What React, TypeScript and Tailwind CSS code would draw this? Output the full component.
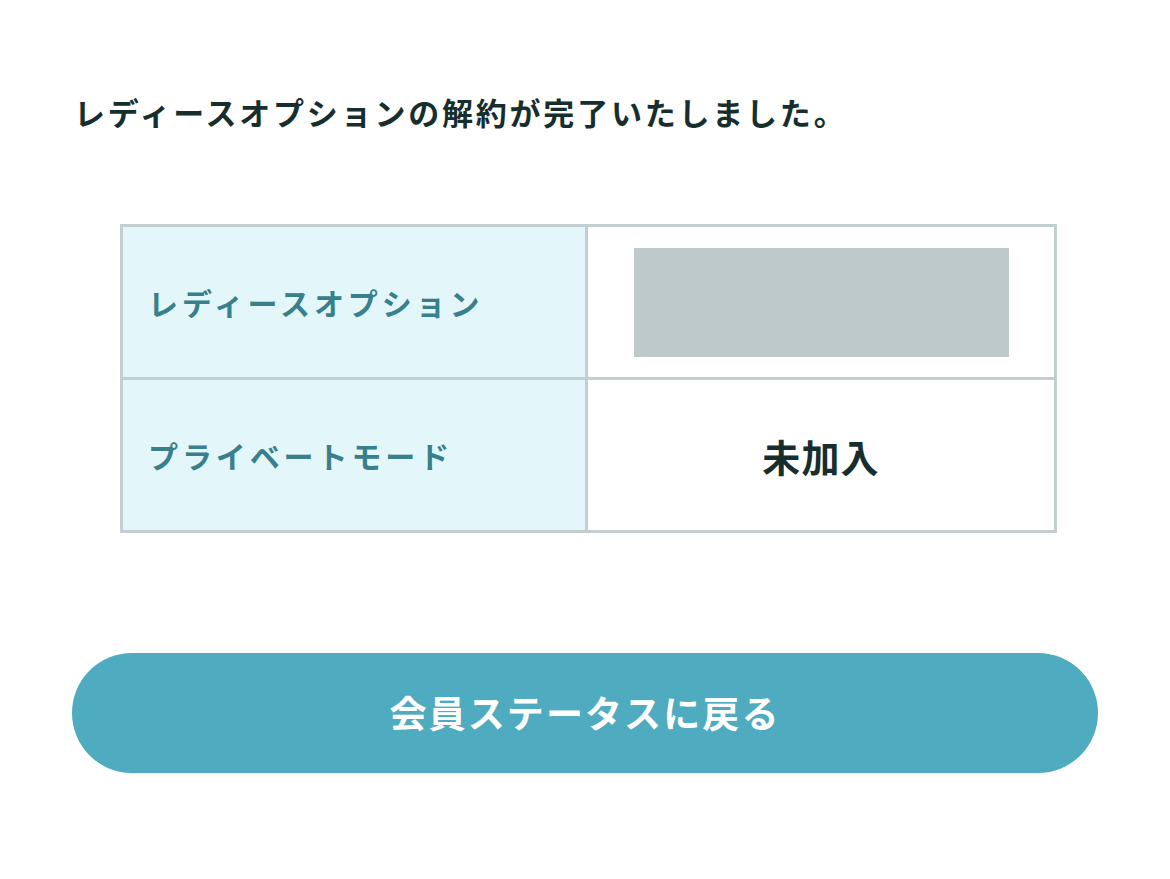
export default function App() {
  return (
    <div
      className="min-h-[879px] bg-white px-[72px] pt-[92px]"
      style={{ fontFamily: '"Noto Sans CJK JP", "Noto Sans", sans-serif' }}
    >
      <h1 className="pl-[2px] text-[31px] font-bold leading-[40px] tracking-[0.09em] text-[#172e2e]">
        レディースオプションの解約が完了いたしました。
      </h1>

      <table className="ml-[48px] mt-[92px] w-[937px] border-collapse border-[3px] border-[#c2cecf]">
        <tbody>
          <tr className="h-[153px]">
            <th className="w-[465px] border-[3px] border-[#c2cecf] bg-[#e3f6f9] pl-[25px] text-left text-[30px] font-bold tracking-[0.13em] text-[#38808c]">
              レディースオプション
            </th>
            <td className="border-[3px] border-[#c2cecf]">
              <div className="mx-auto h-[109px] w-[375px] bg-[#bdc9ca]" />
            </td>
          </tr>
          <tr className="h-[153px]">
            <th className="border-[3px] border-[#c2cecf] bg-[#e3f6f9] pl-[25px] text-left text-[30px] font-bold tracking-[0.13em] text-[#38808c]">
              プライベートモード
            </th>
            <td className="border-[3px] border-[#c2cecf] text-center text-[38px] font-bold tracking-[0.03em] text-[#172e2e]">
              未加入
            </td>
          </tr>
        </tbody>
      </table>

      <button className="mt-[120px] flex h-[120px] w-[1026px] items-center justify-center rounded-full bg-[#4eabc0] text-[37px] font-bold tracking-[0.057em] text-white">
        会員ステータスに戻る
      </button>
    </div>
  );
}
